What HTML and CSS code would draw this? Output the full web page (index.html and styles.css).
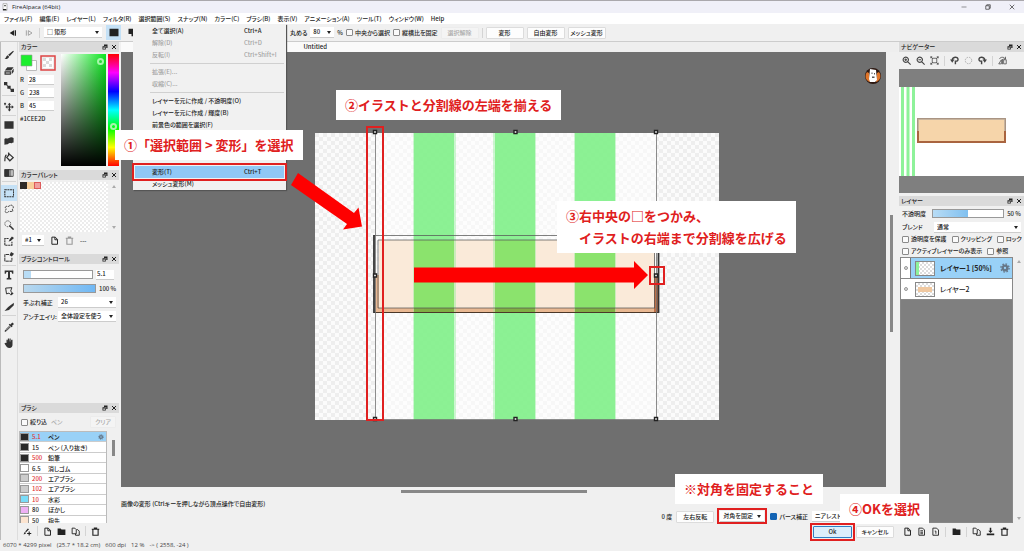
FILE: index.html
```
<!DOCTYPE html>
<html lang="ja">
<head>
<meta charset="utf-8">
<title>FireAlpaca (64bit)</title>
<link rel="stylesheet" href="styles.css">
</head>
<body>
<svg class="defs" aria-hidden="true">
  <symbol id="i-brush" viewBox="0 0 12 12"><path d="M11 1 5 5.800 6.800 7.600 11.800 1.800zM4.400 6.200 6.200 8C5.400 10.500 3 11.200.6 10.800 2.600 9.800 2.400 7 4.400 6.200z"/></symbol>
  <symbol id="i-eraser" viewBox="0 0 12 12"><path d="M4 1.500h7.500L8.500 5.500H1zM.6 6.300h7.700v4.200H.6zM9.200 6.200 11.600 3v3.800L9.200 10z"/><path d="M2 7.800h5v1.200H2z" fill="#ddd"/></symbol>
  <symbol id="i-dots" viewBox="0 0 12 12"><path d="M0 0h4v4H0zM4 4.500h4v3.500H4zM8 8h4v4H8zM3.500 3l5 5.500-.8.8-5-5.500z"/></symbol>
  <symbol id="i-move" viewBox="0 0 12 12"><path d="M6.500 1 8.500 3.200H7.300V5.300H9.300V4L11.800 6 9.300 8V6.700H7.300V9h1.200L6.500 11.400 4.500 9h1.200V6.700H4V8L1.600 6 4 4v1.300h1.700V3.200H4.500zM0 1.500h2.500v1.300H0zM.6.800h1.300v3H.6z"/></symbol>
  <symbol id="i-rect" viewBox="0 0 12 12"><path d="M.5 1.500h11v9H.5z"/></symbol>
  <symbol id="i-blob" viewBox="0 0 12 12"><path d="M.5 3.500C2.500 1.500 4 4 6 2.500c2-1.500 4-1 5.500 0V8c-1.500-1-2 1.500-3.500.5C5.500 7.500 5 10 4 10L.5 10.500z"/></symbol>
  <symbol id="i-bucket" viewBox="0 0 12 12"><path d="M6.500 2.500 11 6.800 7 10.500 3.300 6.500zM5.500.5v4.500M3 3.500C1 4.500 1 7 1 11" fill="none" stroke="currentColor" stroke-width="1.500"/></symbol>
  <symbol id="i-grad" viewBox="0 0 12 12"><path d="M.5 1.500H6v9H.5z"/><path d="M6 1.500h3v9H6z" opacity=".55"/><path d="M1 2h10v8H1z" fill="none" stroke="currentColor"/></symbol>
  <symbol id="i-select" viewBox="0 0 12 12"><path d="M1 2h10.500v8.500H1z" fill="none" stroke="currentColor" stroke-width="1.300" stroke-dasharray="2.400 .7"/></symbol>
  <symbol id="i-lasso" viewBox="0 0 12 12"><path d="M1.500 4C3 1.500 4 4 6 2.500s4-1.500 5 .5-2 3-.5 5-4.500 0-5.500 1.500-4 1-3.500-1 2-2.500 0-4.500z" fill="none" stroke="currentColor" stroke-width="1.200" stroke-dasharray="2.500 1"/></symbol>
  <symbol id="i-wand" viewBox="0 0 12 12"><path d="m6.500 6.500 5 5" stroke="currentColor" stroke-width="1.800"/><circle cx="4.500" cy="4.500" r="3.500" fill="none" stroke="currentColor" stroke-dasharray="1.400 1"/></symbol>
  <symbol id="i-selpen" viewBox="0 0 12 12"><path d="M5.500 3H1v8h8.500V7" fill="none" stroke="currentColor" stroke-width="1.300" stroke-dasharray="2.600 .7"/><path d="M5.500 7 7 3.500 9.500.5 12 2.500 9 5.200z"/></symbol>
  <symbol id="i-selera" viewBox="0 0 12 12"><path d="M6 3H1v8h8.500V7" fill="none" stroke="currentColor" stroke-width="1.200" stroke-dasharray="4 .6"/><path d="M6.500 4 8.500 0 12 2 9.500 5.500z"/></symbol>
  <symbol id="i-text" viewBox="0 0 12 12"><path d="M.8.500h10.400v3.900H9.900L9 2.400H7.200V9.400l1.600.5v1.400H3.200V9.900l1.600-.5V2.400H3L2.100 4.400H.8z"/></symbol>
  <symbol id="i-object" viewBox="0 0 12 12"><path d="M2 2.500 9.500 2 8 6l2.500 3-2.500 1.500-2-2-3 1z" fill="none" stroke="currentColor" stroke-width="1.200"/><path d="m8 8 3.500.5L9 11.500z"/></symbol>
  <symbol id="i-knife" viewBox="0 0 12 12"><path d="M11.800 1 5 6 .6 10.800 6 9.500 11.800 4z"/></symbol>
  <symbol id="i-drop" viewBox="0 0 12 12"><path d="M7.500 3 10 .5 12 2.500l-2.300 2 .5 1.200-1.200.7-3.300-3.300.7-1.100z"/><path d="m7 4.500-5 5-.8 1.700 1.800-.7 5-5" fill="none" stroke="currentColor" stroke-width="1.200"/></symbol>
  <symbol id="i-hand" viewBox="0 0 12 12"><path d="M3 6V2h1.400V5l.3-4.500H6L6.300 5l.4-4.500H8v4.700L8.700 2h1.500v6c0 2-1 4-3.700 4S3 10.500.5 6.500L2 5.600z"/></symbol>
  <symbol id="i-doc" viewBox="0 0 12 12"><path d="M2.500 1.500h4.500l3 3V11H2.500zM6.500 1.500V5H10" fill="none" stroke="currentColor" stroke-width="1.300"/></symbol>
  <symbol id="i-doc8" viewBox="0 0 12 12"><path d="M2.500 1.500h5l2.500 2.500V11H2.500zM4.500 5h3.500M4.500 7h3.500M4.500 9h3.500" fill="none" stroke="currentColor" stroke-width="1.200"/></symbol>
  <symbol id="i-doc1" viewBox="0 0 12 12"><path d="M2.500 1.500h5l2.500 2.500V11H2.500zM5 5.500h1.500V9" fill="none" stroke="currentColor" stroke-width="1.200"/></symbol>
  <symbol id="i-folder" viewBox="0 0 12 12"><path d="M.8 2h4l1.200 1.400h5.200V10.500H.8z"/></symbol>
  <symbol id="i-copy" viewBox="0 0 12 12"><path d="M7 9H1.500V1.500H5L7 3.500zM7.500 3.500h1.500l2 2V11H6V9" fill="none" stroke="currentColor" stroke-width="1.200"/></symbol>
  <symbol id="i-merge" viewBox="0 0 12 12"><path d="M5 1h2v4h2L6 8 3 5h2zM1 8.500h10V11H1z"/></symbol>
  <symbol id="i-trash" viewBox="0 0 12 12"><path d="M1 3h10M4.500 3V1.500h3V3M2.500 3v8h7V3" fill="none" stroke="currentColor" stroke-width="1.500"/></symbol>
  <symbol id="i-addbrush" viewBox="0 0 12 12"><path d="M6.500 2 3 6l1 1 4-4zM2.500 6.500 4 8C3 10 2 9.500.5 9.500 2 8.500 1.500 7 2.500 6.500zM7.500 6H9v2h2v1.400H9v2H7.500v-2h-2V8h2z"/></symbol>
  <symbol id="i-float" viewBox="0 0 12 12"><path d="M4 1h7v7H8.500V4H4zM1 4.500h6.500V11H1z"/><path d="M2.500 7H6v2.500H2.500z" fill="#ddd"/></symbol>
  <symbol id="i-close" viewBox="0 0 12 12"><path d="m2 2 8 8M10 2l-8 8" stroke="currentColor" stroke-width="2"/></symbol>
  <symbol id="i-zoomin" viewBox="0 0 12 12"><path d="M5 1.500a3.500 3.500 0 1 0 .1 0zM7.500 7.500l4 4M3.200 5h3.600M5 3.200v3.600" fill="none" stroke="currentColor" stroke-width="1.500"/></symbol>
  <symbol id="i-zoomout" viewBox="0 0 12 12"><path d="M5 1.500a3.500 3.500 0 1 0 .1 0zM7.500 7.500l4 4M3.200 5h3.600" fill="none" stroke="currentColor" stroke-width="1.500"/></symbol>
  <symbol id="i-fit" viewBox="0 0 12 12"><path d="m1 1 2.500 2.500M11 1 8.500 3.500M1 11l2.500-2.500M11 11 8.500 8.500M3 3h6v6H3zM1 3V1h2M9 1h2v2M1 9v2h2M9 11h2V9" fill="none" stroke="currentColor"/></symbol>
  <symbol id="i-rotl" viewBox="0 0 12 12"><path d="M3 6C3 .5 10.500.5 10.700 4.500c.1 2-1.200 2.500-3.500 2.500v4" fill="none" stroke="currentColor" stroke-width="1.900"/><path d="M0 4.500h6L3 9z"/></symbol>
  <symbol id="i-rot0" viewBox="0 0 12 12"><circle cx="6" cy="6" r="4.300" fill="none" stroke="currentColor" stroke-dasharray="2 1.400"/></symbol>
  <symbol id="i-rotr" viewBox="0 0 12 12"><path d="M9 6C9 .5 1.500.5 1.300 4.500 1.200 6.500 2.500 7 4.800 7v4" fill="none" stroke="currentColor" stroke-width="1.900"/><path d="M12 4.500H6L9 9z"/></symbol>
  <symbol id="i-flip" viewBox="0 0 12 12"><path d="M1 10.500 4.500 5v5.500zM7.500 5v5.500H11V5zM6 4v7M2 4c1-3 6-3 7.500-.5M10 1v3H7" fill="none" stroke="currentColor"/></symbol>
  <symbol id="i-gear" viewBox="0 0 12 12"><circle cx="6" cy="6" r="2.800" fill="none" stroke="currentColor" stroke-width="2.800"/><circle cx="6" cy="6" r="4.900" fill="none" stroke="currentColor" stroke-width="1.600" stroke-dasharray="1.900 1.950"/></symbol>
</svg>

<div class="app">
  <header class="titlebar">
    <svg class="ico app-ico" viewBox="0 0 12 12"><path d="M3 1h6v10H3z" fill="#fff" stroke="#999"/><path d="M5 3h2v2H5zM3 9h5v2H3z"/></svg>
    <h1>FireAlpaca (64bit)</h1>
    <div class="winbtns">
      <button aria-label="最小化"><svg viewBox="0 0 12 12"><path d="M1 6h10" stroke="#333"/></svg></button>
      <button aria-label="元に戻す"><svg viewBox="0 0 12 12"><path d="M1.500 3.500h7v7h-7zM3.500 3.500v-2h7v7h-2" fill="none" stroke="#333" stroke-width="1.400"/></svg></button>
      <button aria-label="閉じる"><svg viewBox="0 0 12 12"><path d="m1.500 1.500 9 9m0-9-9 9" stroke="#333" stroke-width="1.400"/></svg></button>
    </div>
  </header>

  <nav class="menubar">
    <button>ファイル(F)</button><button>編集(E)</button><button>レイヤー(L)</button><button>フィルタ(R)</button><button>選択範囲(S)</button><button>スナップ(N)</button><button>カラー(C)</button><button>ブラシ(B)</button><button>表示(V)</button><button>アニメーション(A)</button><button>ツール(T)</button><button>ウィンドウ(W)</button><button>Help</button>
  </nav>

  <div class="toolbar">
    <div class="tb-left">
      <button class="tb-ico" aria-label="前へ"><svg viewBox="0 0 12 12"><path d="M7.500 2v8L1 6zM8.500 2h2v8h-2z"/></svg></button>
      <button class="tb-ico dim" aria-label="次へ"><svg viewBox="0 0 12 12"><path d="M2 2v8M5 2.500v7L10.500 6z" fill="none" stroke="currentColor" stroke-width="1.300"/></svg></button>
      <i class="vsep"></i>
      <span class="pick shape"><select aria-label="形状"><option>□ 矩形</option></select></span>
      <button class="toggle on" aria-label="新規選択"><svg class="ico" viewBox="0 0 12 12"><path d="M0 1h12v10H0z"/></svg></button>
      <button class="toggle" aria-label="追加選択"><svg class="ico" viewBox="0 0 12 12"><path d="M0 1h9v7H0zM4 4h8v7H4z"/></svg></button>
    </div>
    <div class="tb-right">
      <label for="round">丸める</label>
      <span class="pick pct"><select id="round"><option>80</option></select></span><span>%</span>
      <label class="chk"><input type="checkbox">中央から選択</label>
      <label class="chk"><input type="checkbox">縦横比を固定</label>
      <button class="btn" disabled>選択解除</button>
      <i class="vsep"></i>
      <button class="btn">変形</button>
      <button class="btn">自由変形</button>
      <button class="btn">メッシュ変形</button>
    </div>
  </div>

  <main class="work">
    <aside class="tools">
      <button aria-label="ブラシ"><svg><use href="#i-brush"/></svg></button>
      <button aria-label="消しゴム"><svg><use href="#i-eraser"/></svg></button>
      <button aria-label="ドット"><svg><use href="#i-dots"/></svg></button>
      <hr class="wide">
      <button aria-label="移動"><svg><use href="#i-move"/></svg></button>
      <hr>
      <button aria-label="図形"><svg><use href="#i-rect"/></svg></button>
      <button aria-label="塗り"><svg><use href="#i-blob"/></svg></button>
      <button aria-label="バケツ"><svg><use href="#i-bucket"/></svg></button>
      <button aria-label="グラデーション"><svg><use href="#i-grad"/></svg></button>
      <hr class="wide">
      <button class="on" aria-label="選択"><svg><use href="#i-select"/></svg></button>
      <button aria-label="投げなわ"><svg><use href="#i-lasso"/></svg></button>
      <button aria-label="自動選択"><svg><use href="#i-wand"/></svg></button>
      <button aria-label="選択ペン"><svg><use href="#i-selpen"/></svg></button>
      <button aria-label="選択消しゴム"><svg><use href="#i-selera"/></svg></button>
      <hr>
      <button aria-label="テキスト"><svg><use href="#i-text"/></svg></button>
      <button aria-label="操作"><svg><use href="#i-object"/></svg></button>
      <button aria-label="分割"><svg><use href="#i-knife"/></svg></button>
      <hr class="wide">
      <button aria-label="スポイト"><svg><use href="#i-drop"/></svg></button>
      <button aria-label="手のひら"><svg><use href="#i-hand"/></svg></button>
    </aside>

    <aside class="dock left">
      <section class="panel color">
        <h2>カラー<svg class="hi"><use href="#i-float"/></svg><svg class="hi"><use href="#i-close"/></svg></h2>
        <div class="color-body">
          <div class="color-nums">
            <svg class="swatches" viewBox="0 0 38 18"><path d="M6.500 6.500h10v10h-10z" fill="#fff" stroke="#bbb"/><path d="M1 1h11v11H1z" fill="#1cee2d" stroke="#999" stroke-width=".6"/><path d="M21 2h14v14H21z" fill="#ececec" stroke="#d44" stroke-width="1.500"/><path d="M23 4h10v10H23z" fill="#fff"/><path d="M23 4h3v3h-3zM29 4h3v3h-3zM26 7h3v3h-3zM23 10h3v3h-3zM29 10h3v3h-3z" fill="#dcdcdc"/></svg>
            <label>R<input value="28"></label>
            <label>G<input value="238"></label>
            <label>B<input value="45"></label>
            <output>#1CEE2D</output>
          </div>
          <div class="sv"><i class="ring"></i></div>
          <div class="hue"><i class="ring"></i></div>
        </div>
      </section>
      <section class="panel palette">
        <h2>カラーパレット<svg class="hi"><use href="#i-float"/></svg><svg class="hi"><use href="#i-close"/></svg></h2>
        <div class="pal-body">
          <div class="checker pal"><i class="c1"></i><i class="c2"></i><i class="c3"></i></div>
          <div class="updown"><i class="up"></i><i class="down"></i></div>
        </div>
        <div class="pal-foot">
          <span class="pick"><select aria-label="パレット"><option>#1</option></select></span>
          <button aria-label="新規"><svg><use href="#i-doc"/></svg></button>
          <button class="dim" aria-label="削除"><svg><use href="#i-trash"/></svg></button>
          <span>---</span>
        </div>
      </section>
      <section class="panel control">
        <h2>ブラシコントロール<svg class="hi"><use href="#i-float"/></svg><svg class="hi"><use href="#i-close"/></svg></h2>
        <div class="ctl-body">
          <div class="row"><input class="bar size" type="range" aria-label="サイズ" value="10"><input class="num" aria-label="サイズ値" value="5.1"></div>
          <div class="row"><input class="bar full" type="range" aria-label="不透明度" value="100"><span>100 %</span></div>
          <div class="row"><label for="stab">手ぶれ補正</label><span class="pick"><select id="stab"><option>26</option></select></span></div>
          <div class="row"><label for="aa">アンチエイリ:</label><span class="pick"><select id="aa"><option>全体設定を使う</option></select></span></div>
        </div>
      </section>
      <section class="panel brushes">
        <h2>ブラシ<svg class="hi"><use href="#i-float"/></svg><svg class="hi"><use href="#i-close"/></svg></h2>
        <div class="filter"><label class="chk"><input type="checkbox">絞り込</label><input class="find" aria-label="検索" placeholder="ペン"><button class="btn" disabled>クリア</button></div>
        <div class="brush-area">
          <div class="brush-clip">
            <ul class="brush-list">
              <li class="on"><i class="k"></i><b>5.1</b><span>ペン</span><svg><use href="#i-gear"/></svg></li>
              <li><i class="k"></i><em>15</em><span>ペン (入り抜き)</span></li>
              <li><i class="k"></i><b>500</b><span>鉛筆</span></li>
              <li><i class="w"></i><em>6.5</em><span>消しゴム</span></li>
              <li><i class="g"></i><b>200</b><span>エアブラシ</span></li>
              <li><i class="g"></i><b>102</b><span>エアブラシ</span></li>
              <li><i class="c"></i><b>10</b><span>水彩</span></li>
              <li><i class="p"></i><em>80</em><span>ぼかし</span></li>
              <li><i class="o"></i><em>50</em><span>指先</span></li>
            </ul>
          </div>
          <div class="brush-scroll"></div>
        </div>
        <div class="brush-foot">
          <button aria-label="ブラシ追加"><svg><use href="#i-addbrush"/></svg></button><i class="vsep"></i>
          <button aria-label="新規"><svg><use href="#i-doc"/></svg></button>
          <button aria-label="フォルダ"><svg><use href="#i-folder"/></svg></button>
          <button aria-label="複製"><svg><use href="#i-copy"/></svg></button><i class="vsep"></i>
          <button aria-label="削除"><svg><use href="#i-trash"/></svg></button>
        </div>
      </section>
    </aside>

    <section class="center">
      <div class="tabs"><button>Untitled</button></div>
      <div class="stage">
        <div class="canvas">
          <svg viewBox="121 52 765 435" preserveAspectRatio="xMinYMin meet" role="img" aria-label="キャンバス">
            <defs>
              <pattern id="chk" x="315" y="133" width="8" height="8" patternUnits="userSpaceOnUse"><path d="M0 0h8v8H0z" fill="#fbfbfb"/><path d="M0 0h4v4H0zM4 4h4v4H4z" fill="#eeeeee"/></pattern>
            </defs>
            <path d="M315 133h404v287H315z" fill="url(#chk)"/>
            <path d="M375 133h281v287H375z" fill="#fff" opacity=".55"/>
            <path d="M379 240h276v69H379z" fill="#faead9"/>
            <path d="M375 308h284v5h-284zM375 275h4v34h-4z" fill="#e9b892"/>
            <path d="M654 275h4v37h-4z" fill="#bd7048"/>
            <path d="M413 133h43v287h-43zM493 133h43v287h-43zM574 133h42v287h-42z" fill="#87ee90" opacity=".4"/>
            <path d="M414 133h40v287h-40zM495 133h40v287h-40zM575 133h40v287h-40z" fill="#85f08d"/>
            <path d="M414 133h40v287h-40zM495 133h40v287h-40zM575 133h40v287h-40z" fill="url(#chk)" opacity=".06"/>
            <path d="M414 240h40v68h-40zM495 240h40v68h-40zM575 240h40v68h-40z" fill="#8be36d"/>
            <path d="M414 308h40v5h-40zM495 308h40v5h-40zM575 308h40v5h-40z" fill="#7fae43"/>
            <path d="M374 235.500h285M378 240h277M378 308h277" fill="none" stroke="#555" stroke-opacity=".75"/>
            <path d="M378 240v68M654.500 240v68" stroke="#555" stroke-opacity=".75"/>
            <path d="M374 312.500h285" stroke="#4c3828"/>
            <path d="M374 235v78M658.500 235v78" stroke="#333" stroke-width="1.800"/>
            <path d="M375.500 132.500h281v287h-281z" fill="none" stroke="#707070" stroke-width=".8"/>
            <g fill="#fff" stroke="#222" stroke-width="1.400"><path d="M373.500 130.500h3v3h-3zM514 130.500h3v3h-3zM654.500 130.500h3v3h-3zM373.500 274h3v3h-3zM654.500 274h3v3h-3zM373.500 417.500h3v3h-3zM514 417.500h3v3h-3zM654.500 417.500h3v3h-3z"/></g>
            <g fill="none" stroke="#e02020" stroke-width="2"><path d="M367 127h16v293h-16zM650 267h14v17h-14z"/></g>
            <path d="M298 173 354 213l4.500-5.500 3.500 19-19 3 4-5.500-56-39zM414 267.500h220V261l14 14-14 14v-6.500H414z" fill="#fe0000"/>
            <circle cx="873" cy="76" r="8" fill="#2c1710"/>
            <path d="M867 72c-3 4-1 9 3 10l-1-9zM879 72c3 4 1 9-3 10l1-9z" fill="#e0762a"/>
            <path d="m870 69 6 1 1 10-2 2h-5l-1-3z" fill="#fff"/><path d="M871.500 72.500h1v1.500h-1zM874 73h1v1.500h-1zM872 76.500h2.500v1.500H872z" fill="#555"/>
          </svg>
        </div>
        <div class="vscroll"><i></i></div>
      </div>
      <div class="hscroll"><i></i></div>
      <div class="options">
        <p>画像の変形 (Ctrlキーを押しながら頂点操作で自由変形)</p>
        <div class="opt-row">
          <span>0 度</span>
          <button class="btn">左右反転</button>
          <span class="pick mark"><select aria-label="対角"><option>対角を固定</option></select></span>
          <label class="chk"><input type="checkbox" checked>パース補正</label>
          <span class="pick interp"><select aria-label="補間"><option>ニアレストネイバー</option></select></span>
        </div>
        <div class="opt-row end">
          <span class="mark"><button class="btn ok">Ok</button></span>
          <button class="btn">キャンセル</button>
        </div>
      </div>
    </section>

    <aside class="dock right">
      <section class="panel">
        <h2>ナビゲーター<svg class="hi"><use href="#i-float"/></svg><svg class="hi"><use href="#i-close"/></svg></h2>
        <div class="nav-tools">
          <button aria-label="拡大"><svg><use href="#i-zoomin"/></svg></button>
          <button aria-label="縮小"><svg><use href="#i-zoomout"/></svg></button>
          <button aria-label="全体"><svg><use href="#i-fit"/></svg></button><i class="vsep"></i>
          <button aria-label="左回転"><svg><use href="#i-rotl"/></svg></button>
          <button class="dim" aria-label="回転リセット"><svg><use href="#i-rot0"/></svg></button>
          <button aria-label="右回転"><svg><use href="#i-rotr"/></svg></button><i class="vsep"></i>
          <button aria-label="左右反転"><svg><use href="#i-flip"/></svg></button>
        </div>
        <div class="preview">
          <svg viewBox="899 87 125 89" role="img" aria-label="プレビュー"><path d="M899 87h125v89H899z" fill="#fff"/><path d="M901 87h3v89h-3zM906.500 87h3v89h-3zM912 87h3v89h-3z" fill="#8ef29a"/><path d="M917.500 118.500h88v24h-88z" fill="#f6d5aa" stroke="#7b5a45"/><path d="M918 131v11h87v-11" fill="none" stroke="#a9643f" stroke-width="2"/><path d="M918 131v-12h87v12" fill="none" stroke="#b9a898" stroke-width="1.500"/></svg>
        </div>
      </section>
      <section class="panel layers">
        <h2>レイヤー<svg class="hi"><use href="#i-float"/></svg><svg class="hi"><use href="#i-close"/></svg></h2>
        <div class="row"><label for="op">不透明度</label><input id="op" class="bar half" type="range" value="50"><span>50 %</span></div>
        <div class="row"><label for="bl">ブレンド</label><span class="pick"><select id="bl"><option>通常</option></select></span></div>
        <div class="row checks"><label class="chk"><input type="checkbox">透明度を保護</label><label class="chk"><input type="checkbox">クリッピング</label><label class="chk"><input type="checkbox">ロック</label></div>
        <div class="row checks"><label class="chk"><input type="checkbox">アクティブレイヤーのみ表示</label><label class="chk"><input type="checkbox">参照</label></div>
        <div class="layer-area">
          <ul class="layer-list">
            <li class="on"><i class="eye"></i><span class="thumb checker one"></span><strong>レイヤー1 [50%]</strong><svg><use href="#i-gear"/></svg></li>
            <li><i class="eye"></i><span class="thumb checker two"></span><span>レイヤー2</span></li>
          </ul>
          <div class="updown"><i class="up"></i><i class="down"></i></div>
        </div>
        <div class="layer-foot">
          <button aria-label="新規"><svg><use href="#i-doc"/></svg></button>
          <button aria-label="8bit"><svg><use href="#i-doc8"/></svg></button>
          <button aria-label="1bit"><svg><use href="#i-doc1"/></svg></button><i class="vsep"></i>
          <button aria-label="フォルダ"><svg><use href="#i-folder"/></svg></button><i class="vsep"></i>
          <button aria-label="複製"><svg><use href="#i-copy"/></svg></button>
          <button aria-label="結合"><svg><use href="#i-merge"/></svg></button>
          <button aria-label="削除"><svg><use href="#i-trash"/></svg></button>
        </div>
      </section>
    </aside>
  </main>

  <footer class="status"><span>6070 * 4299 pixel</span><span>(25.7 * 18.2 cm)</span><span>600 dpi</span><span>12 %</span><span>-&gt; ( 2558, -24 )</span></footer>

  <div class="menu" role="menu">
    <button role="menuitem"><span>全て選択(A)</span><kbd>Ctrl+A</kbd></button>
    <button role="menuitem" disabled><span>解除(D)</span><kbd>Ctrl+D</kbd></button>
    <button role="menuitem" disabled><span>反転(I)</span><kbd>Ctrl+Shift+I</kbd></button>
    <hr>
    <button role="menuitem" disabled><span>拡張(E)...</span></button>
    <button role="menuitem" disabled><span>収縮(C)...</span></button>
    <hr>
    <button role="menuitem"><span>レイヤーを元に作成 / 不透明度(O)</span></button>
    <button role="menuitem"><span>レイヤーを元に作成 / 輝度(B)</span></button>
    <button role="menuitem"><span>前景色の範囲を選択(F)</span></button>
    <button role="menuitem" class="hot"><span>変形(T)</span><kbd>Ctrl+T</kbd></button>
    <button role="menuitem"><span>メッシュ変形(M)</span></button>
  </div>

  <p class="note n1">①「選択範囲 &gt; 変形」を選択</p>
  <p class="note n2">②イラストと分割線の左端を揃える</p>
  <p class="note n3">③右中央の□をつかみ、<br>　イラストの右端まで分割線を広げる</p>
  <p class="note n4">※対角を固定すること</p>
  <p class="note n5">④OKを選択</p>
</div>
</body>
</html>
```
FILE: styles.css
```
* { box-sizing: border-box; }
body, h1, h2, p, ul, hr { margin: 0; padding: 0; }
body {
  font: 500 6px/10px "Noto Sans CJK JP", "Noto Sans", sans-serif;
  font-feature-settings: "palt";
  color: #222;
  background: #f0f0f0;
}
button, input, select, kbd { font: inherit; font-feature-settings: inherit; color: inherit; margin: 0; padding: 0; border: 0; background: none; }
button { display: inline-flex; align-items: center; justify-content: center; white-space: nowrap; }
label, span, p { white-space: nowrap; }
ul { list-style: none; }
svg { fill: currentColor; display: block; }
.defs { display: none; }
.ico { width: 11px; height: 11px; flex: none; }
.dim { color: #999; }
.vsep { width: 1px; height: 10px; background: #d4d4d4; flex: none; }

.app { position: relative; display: grid; grid-template-rows: 13px 11px 18px 1fr 11px; min-height: 100vh; overflow: hidden; }

.titlebar { display: flex; align-items: center; gap: 3px; padding-left: 1px; background: #f0f0f8; border-top: 1px solid #aaa8ac; }
.titlebar h1 { font: 400 6px/10px "Open Sans", sans-serif; flex: 1; }
.app-ico { width: 8px; height: 8px; }
.winbtns { display: flex; gap: 18px; padding-right: 9px; }
.winbtns svg { width: 6px; height: 6px; }

.menubar { display: flex; gap: 7px; padding-left: 4px; background: #fff; }

.toolbar { display: grid; grid-template-columns: 290px 1fr; align-items: center; background: #f0f0f0; border-bottom: 1px solid #ccc; }
.tb-left, .tb-right { display: flex; align-items: center; }
.tb-left { padding-left: 7px; gap: 4px; }
.tb-right { gap: 3px; }
.tb-ico { width: 12px; height: 12px; }
.tb-ico svg { width: 8px; height: 8px; }
.toggle { width: 15px; height: 15px; }
.toggle.on { background: #c5e1f6; }
.toggle .ico { width: 10px; height: 9px; }
.shape { width: 58px; height: 12px; }
.pct { width: 24px; height: 11px; }
.tb-right .btn { width: 38px; }
.btn { height: 12px; padding: 0 4px; background: #fdfdfd; border: 1px solid #dcdcdc; border-radius: 1px; }
.btn:disabled { color: #aaa; background: #f4f4f4; border-color: #ececec; }

.pick { position: relative; display: inline-flex; height: 11px; background: #fff; border-bottom: 1px solid #ccc; }
.pick select { appearance: none; width: 100%; padding: 0 8px 0 3px; border-radius: 0; }
.pick::after { content: ""; position: absolute; right: 3px; top: 4px; border: 2px solid transparent; border-top: 3px solid #222; border-bottom: 0; pointer-events: none; }
.chk { display: inline-flex; align-items: center; gap: 2px; }
.chk input { appearance: none; width: 7px; height: 7px; border: 1px solid #8a8a8a; border-radius: 1px; background: #fafafa; }
.chk input:checked { background: #1464b4; border-color: #1464b4; }

.work { display: grid; grid-template-columns: 18px 103px 1fr 126px; min-height: 0; }

.tools { display: flex; flex-direction: column; align-items: center; padding-top: 5px; border-left: 1px solid #bbb; border-right: 1px solid #ddd; }
.tools button { width: 16px; height: 16px; color: #333; }
.tools svg { width: 10px; height: 10px; }
.tools .on { background: #c5e1f6; }
.tools hr { width: 14px; height: 2px; border: 0; border-top: 1px solid #d4d4d4; flex: none; }
.tools hr.wide { height: 4px; }

.dock { display: flex; flex-direction: column; }
.left { padding: 0 2px 0 1px; }
.right { padding-left: 1px; gap: 3px; }
.panel h2 { display: flex; align-items: center; gap: 3px; height: 10px; padding: 0 2px; font-size: 6px; font-weight: 500; line-height: 10px; background: #dadada; }
.hi { width: 6px; height: 6px; }
.hi:first-of-type { margin-left: auto; }
.row { display: flex; align-items: center; gap: 3px; }

.color { height: 128px; }
.color-body { display: grid; grid-template-columns: 39px 1fr 11px; gap: 2px; padding: 2px 0 2px 1px; height: 116px; }
.color-nums { display: flex; flex-direction: column; gap: 3px; }
.swatches { width: 38px; height: 18px; }
.color-nums label { display: flex; align-items: center; gap: 4px; height: 10px; }
.color-nums input { width: 26px; padding-left: 1px; background: #fff; height: 10px; border-bottom: 1px solid #ccc; }
.sv { position: relative; background: linear-gradient(to top, #000, transparent), linear-gradient(to right, #fff, #0ce81f); }
.hue { position: relative; background: linear-gradient(#f00, #f0f, #00f, #0ff, #0f0, #ff0, #f00); }
.ring { position: absolute; width: 7px; height: 7px; border: 2px solid #a8f5ac; border-radius: 50%; }
.sv .ring { right: 2px; top: 4px; }
.hue .ring { left: 2px; top: 69px; }

.checker { background: repeating-conic-gradient(#ececec 0 25%, #fff 0 50%) 0 0 / 4px 4px; }
.palette { height: 84px; }
.pal-body { display: grid; grid-template-columns: 1fr 11px; height: 52px; padding: 2px 0 0 1px; }
.pal { display: flex; }
.pal i { width: 7px; height: 7px; }
.c1 { background: #2e2a28; }
.c2 { background: #f8cf9c; }
.c3 { background: #f0a0a0; border: 1px solid #dd5a5a; }
.updown { display: flex; flex-direction: column; justify-content: space-between; align-items: center; padding: 3px 0; }
.updown i { border: 2px solid transparent; }
.updown .up { border-bottom: 3px solid #aaa; border-top: 0; }
.updown .down { border-top: 3px solid #aaa; border-bottom: 0; }
.pal-foot { display: flex; align-items: center; gap: 6px; padding: 3px 0 0 3px; }
.pal-foot .pick { width: 22px; }
.pal-foot svg { width: 9px; height: 9px; }

.control { height: 149px; }
.ctl-body { display: grid; grid-auto-rows: 11px; gap: 3px; padding: 5px 5px 0 4px; }
.bar { appearance: none; height: 9px; border: 1px solid #999; }
.bar::-webkit-slider-thumb { appearance: none; width: 0; }
.size { width: 70px; background: linear-gradient(to right, #b8dcf5 10%, #fff 10%); }
.full { width: 73px; background: linear-gradient(to right, #b8d8ee, #70b8f4); }
.half { width: 72px; background: linear-gradient(to right, #b8dcf5, #80c0f0 50%, #fff 50%); }
.num { width: 18px; height: 10px; padding-left: 1px; background: #fff; border-bottom: 1px solid #ccc; }
.ctl-body label { width: 32px; }
.ctl-body .pick { flex: 1; }

.brushes { flex: 1; display: flex; flex-direction: column; }
.filter { display: flex; align-items: center; gap: 4px; height: 18px; padding: 0 3px 0 2px; }
.find { width: 36px; height: 10px; flex: 1; min-width: 0; }
.find::placeholder { color: #aaa; }
.brush-area { display: grid; grid-template-columns: 88px 1fr; height: 93px; }
.brush-clip { height: 92px; overflow: hidden; }
.brush-list { display: grid; grid-auto-rows: 1fr; height: 96px; border: 1px solid #bbb; background: #fff; }
.brush-list li { display: grid; grid-template-columns: 9px 13px 1fr 8px; gap: 3px; align-items: center; border-bottom: 1px solid #ccc; min-height: 0; line-height: 9px; }
.brush-list i { height: 8px; border: 1px solid #999; }
.brush-list b, .brush-list em { font-style: normal; font-weight: 500; }
.brush-list b { color: #e23333; }
.brush-list svg { width: 6px; height: 6px; color: #678; }
.brush-list .on { background: #99d1f7; font-weight: 700; }
.brush-list .k { background: #2a2a2a; }
.brush-list .w { background: #fff; }
.brush-list .g { background: #ccc; }
.brush-list .c { background: #7adcf8; }
.brush-list .p { background: #eeb0f4; }
.brush-list .o { background: #fce4d0; }
.brush-scroll { justify-self: center; width: 3px; height: 16px; margin-top: 9px; background: #888; }
.brush-foot { display: flex; align-items: center; gap: 5px; padding: 2px 0 0 4px; }
.brush-foot svg, .layer-foot svg { width: 9px; height: 9px; }

.center { display: flex; flex-direction: column; min-width: 0; }
.tabs { display: flex; height: 10px; background: #eee; }
.tabs button { width: 50%; background: #fafafa; }
.stage { display: grid; grid-template-columns: 1fr 12px; flex: 1; min-height: 0; }
.canvas { background: #6f6f6f; overflow: hidden; }
.canvas svg { width: 100%; height: auto; }
.vscroll i { display: block; width: 3px; height: 27%; margin: 163px auto 0 4px; background: #888; }
.hscroll { height: 8px; padding-top: 3px; }
.hscroll i { display: block; width: 24%; height: 3px; margin-left: 36%; background: #888; }
.options { height: 45px; padding-top: 4px; }
.opt-row { display: flex; align-items: center; justify-content: flex-end; gap: 4px; height: 13px; margin-top: 1px; }
.opt-row.end { padding-right: 4px; margin-top: 2px; }
.opt-row .btn { width: 38px; }
.opt-row .mark { position: relative; display: inline-flex; }
.mark::before { content: ""; position: absolute; inset: -3px; border: 2px solid #e02020; z-index: 1; }
.opt-row .pick.mark { width: 44px; margin: 0 2px; }
.interp { width: 86px; }
.opt-row .ok { width: 39px; border-color: #2f7fc4; background: #dceefb; }

.nav-tools { display: flex; align-items: center; gap: 5px; height: 17px; padding-left: 3px; color: #444; }
.nav-tools svg { width: 9px; height: 9px; }
.preview { padding: 18px 0 17px; background: #7f7f7f; }
.layers { display: flex; flex-direction: column; flex: 1; }
.layers .row { height: 12px; padding: 0 3px; }
.layers .row label[for] { width: 29px; }
.layers .row .pick { flex: 1; }
.layers .row:nth-of-type(1) { height: 15px; }
.layers .checks { gap: 5px; }
.layer-area { display: grid; grid-template-columns: 113px 1fr; flex: 1; margin-left: 1px; }
.layer-list { background: #7f7f7f; border: 1px solid #888; }
.layer-list li { display: grid; grid-template-columns: 9px 20px 1fr 10px; gap: 5px; align-items: center; height: 21px; padding-right: 2px; background: #fff; border-bottom: 1px solid #888; font-size: 7px; }
.layer-list .on { background: linear-gradient(to right, #fff 9px, #777 9px, #777 10px, #99d1f7 10px); }
.layer-list svg { width: 10px; height: 10px; color: #678; }
.layer-list strong { font-weight: 700; }
.eye { width: 4px; height: 4px; border: 1px solid #999; border-radius: 50%; justify-self: center; background: #ddd; }
.thumb { height: 15px; border: 1px solid #888; }
.one { background: linear-gradient(to right, #8ef29a 3px, transparent 3px), repeating-conic-gradient(#ddd 0 25%, #fff 0 50%) 0 0 / 4px 4px; }
.two { background: linear-gradient(#f0c8a0, #f0c8a0) center / 14px 5px no-repeat, repeating-conic-gradient(#ddd 0 25%, #fff 0 50%) 0 0 / 4px 4px; }
.layer-foot { display: flex; align-items: center; justify-content: space-between; height: 17px; padding: 0 15px 0 4px; }

.status { display: flex; gap: 5px; padding-left: 3px; font: 400 6px/10px "Open Sans", sans-serif; color: #444; }

.menu { position: absolute; left: 133px; top: 24px; width: 153px; padding: 1px 2px 0; background: #f1f1f1; box-shadow: 1px 1px 1px #555; }
.menu button { display: grid; grid-template-columns: 92px 1fr; width: 100%; height: 12px; padding-left: 17px; text-align: left; justify-items: start; }
.menu button:disabled { color: #a4a4a4; }
.menu hr { height: 1px; margin: 2px 0 2px 15px; border: 0; background: #d0d0d0; }
.menu .hot { position: relative; margin-top: 35px; background: #90c8f6; }
.menu .hot::before { content: ""; position: absolute; inset: -3px; border: 2px solid #e02020; }

.note { position: absolute; background: #fff; color: #e02020; font-weight: 700; font-size: 13px; line-height: 22px; padding: 4px 9px; font-feature-settings: normal; }
.n1 { left: 115px; top: 130px; }
.n2 { left: 336px; top: 90px; }
.n3 { left: 557px; top: 201px; }
.n4 { left: 675px; top: 474px; }
.n5 { left: 840px; top: 494px; }
```
